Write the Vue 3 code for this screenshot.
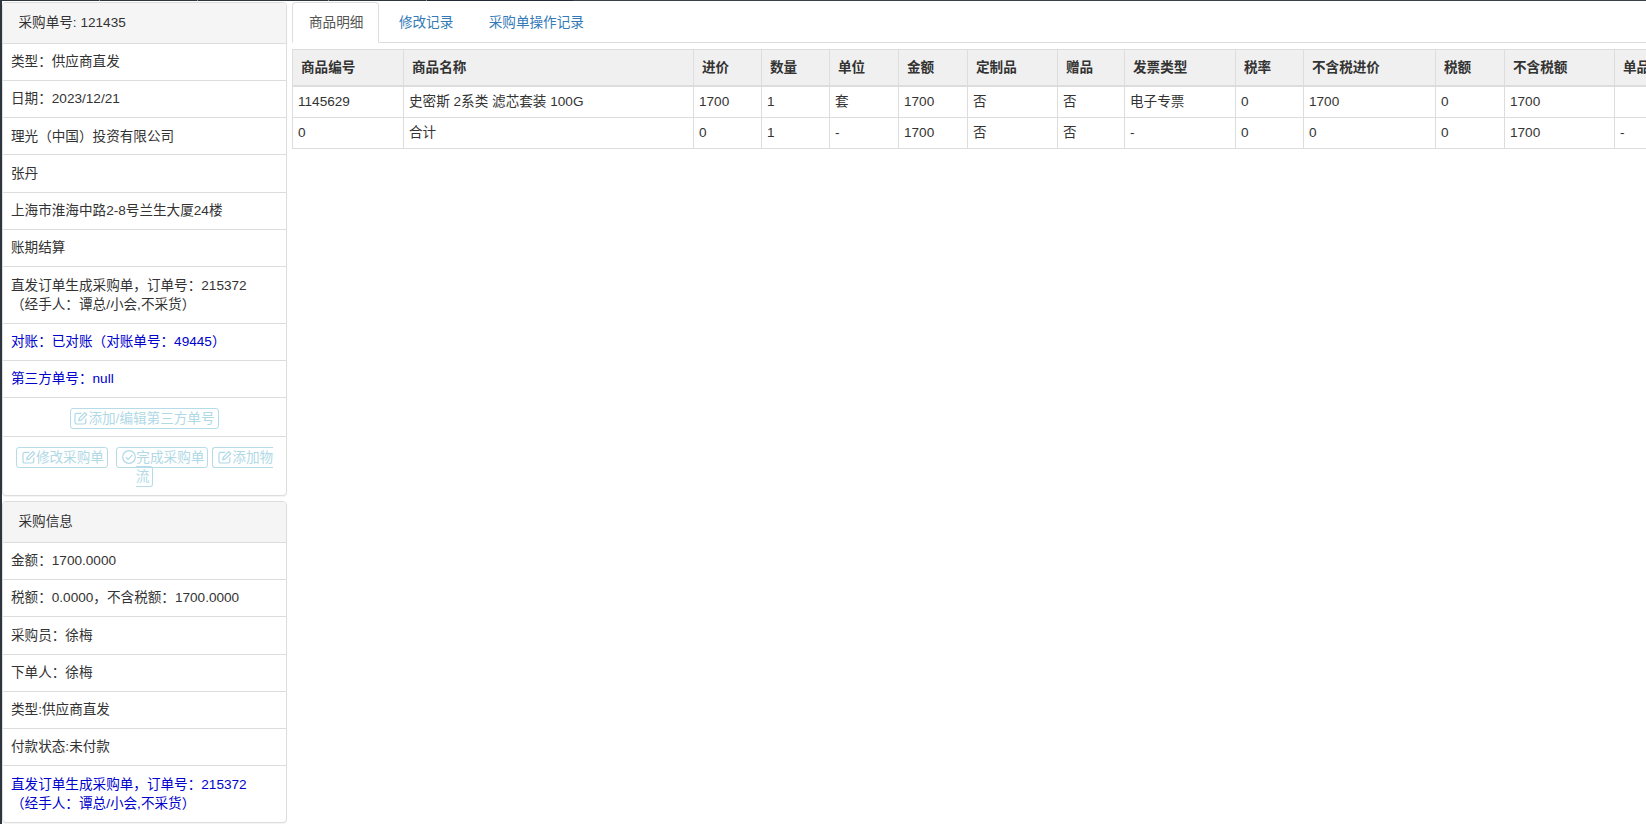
<script setup>
const orderRows = [
  { text: '类型：供应商直发' },
  { text: '日期：2023/12/21' },
  { text: '理光（中国）投资有限公司' },
  { text: '张丹' },
  { text: '上海市淮海中路2-8号兰生大厦24楼' },
  { text: '账期结算' },
  { text: '直发订单生成采购单，订单号：215372\n（经手人：谭总/小会,不采货）' },
  { text: '对账：已对账（对账单号：49445）', blue: true },
  { text: '第三方单号：null', blue: true }
]
const infoRows = [
  { text: '金额：1700.0000' },
  { text: '税额：0.0000，不含税额：1700.0000' },
  { text: '采购员：徐梅' },
  { text: '下单人：徐梅' },
  { text: '类型:供应商直发' },
  { text: '付款状态:未付款' },
  { text: '直发订单生成采购单，订单号：215372\n（经手人：谭总/小会,不采货）', blue: true }
]
const columns = [
  { label: '商品编号', width: 111 },
  { label: '商品名称', width: 290 },
  { label: '进价', width: 68 },
  { label: '数量', width: 68 },
  { label: '单位', width: 69 },
  { label: '金额', width: 69 },
  { label: '定制品', width: 90 },
  { label: '赠品', width: 67 },
  { label: '发票类型', width: 111 },
  { label: '税率', width: 68 },
  { label: '不含税进价', width: 132 },
  { label: '税额', width: 69 },
  { label: '不含税额', width: 110 },
  { label: '单品', width: 100 }
]
const tableWidth = columns.reduce((s, c) => s + c.width, 0)
const rows = [
  ['1145629', '史密斯 2系类 滤芯套装 100G', '1700', '1', '套', '1700', '否', '否', '电子专票', '0', '1700', '0', '1700', ''],
  ['0', '合计', '0', '1', '-', '1700', '否', '否', '-', '0', '0', '0', '1700', '-']
]
</script>

<template>
  <div class="page">
    <div class="topline"></div>
    <div class="main">
      <aside class="side">
        <section class="panel">
          <div class="panel-head">采购单号: 121435</div>
          <div v-for="r in orderRows" :key="r.text" class="row" :class="{ blue: r.blue }">{{ r.text }}</div>
          <div class="row center first-btns">
            <a class="btn"><svg class="ico" viewBox="0 0 14 14"><path d="M11.8 7.6v3.7a1.700 1.700 0 0 1-1.700 1.700H2.700A1.700 1.700 0 0 1 1 11.300V4a1.700 1.700 0 0 1 1.700-1.700H7.400M5.200 7.400 10.800 1.500l1.900 1.900L7.100 9.200l-2.300.5z"/></svg>添加/编辑第三方单号</a>
          </div>
          <div class="row center last">
            <a class="btn wide gap-lg"><svg class="ico" viewBox="0 0 14 14"><path d="M11.8 7.6v3.7a1.700 1.700 0 0 1-1.700 1.700H2.700A1.700 1.700 0 0 1 1 11.300V4a1.700 1.700 0 0 1 1.700-1.700H7.400M5.200 7.400 10.800 1.500l1.900 1.900L7.100 9.200l-2.300.5z"/></svg>修改采购单</a>
            <a class="btn wide gap-sm"><svg class="ico" viewBox="0 0 14 14"><circle cx="7" cy="7" r="6.300"/><path d="M3.800 7.200 6.100 9.500 10.400 4.900"/></svg>完成采购单</a>
            <a class="btn wide"><svg class="ico" viewBox="0 0 14 14"><path d="M11.8 7.6v3.7a1.700 1.700 0 0 1-1.700 1.700H2.700A1.700 1.700 0 0 1 1 11.300V4a1.700 1.700 0 0 1 1.700-1.700H7.400M5.200 7.400 10.800 1.500l1.900 1.900L7.100 9.200l-2.300.5z"/></svg>添加物流</a>
          </div>
        </section>
        <section class="panel">
          <div class="panel-head">采购信息</div>
          <div v-for="r in infoRows" :key="r.text" class="row" :class="{ blue: r.blue }">{{ r.text }}</div>
        </section>
      </aside>
      <main class="content">
        <nav class="tabs">
          <a class="tab active">商品明细</a>
          <a class="tab">修改记录</a>
          <a class="tab">采购单操作记录</a>
        </nav>
        <div class="table-clip">
          <table class="grid" :style="{ width: tableWidth + 'px' }">
            <colgroup>
              <col v-for="c in columns" :key="c.label" :style="{ width: c.width + 'px' }" />
            </colgroup>
            <thead>
              <tr><th v-for="c in columns" :key="c.label">{{ c.label }}</th></tr>
            </thead>
            <tbody>
              <tr v-for="(row, i) in rows" :key="i">
                <td v-for="(cell, j) in row" :key="j">{{ cell }}</td>
              </tr>
            </tbody>
          </table>
        </div>
      </main>
    </div>
  </div>
</template>

<style>
html, body { margin: 0; background: #fff; overflow: hidden; }
</style>

<style scoped>
.page {
  width: 1646px;
  height: 824px;
  overflow: hidden;
  box-sizing: border-box;
  border-left: 2px solid #2f353e;
  font-family: "Liberation Sans", "Noto Sans CJK SC", sans-serif;
  font-size: 13.6px;
  line-height: 1.42857;
  color: #333;
  background: #fff;
}
.topline {
  height: 1px;
  background: linear-gradient(90deg,
    #2f353e 0 97px, #8a9098 97px 98px,
    #2f353e 98px 195px, #8a9098 195px 196px,
    #2f353e 196px 326px, #8a9098 326px 327px,
    #2f353e 327px 424px, #8a9098 424px 425px,
    #232a36 425px 571px, #39404a 571px 100%);
}
.main { display: flex; align-items: flex-start; padding-top: 1px; }
.side { width: 285px; flex: none; display: flex; flex-direction: column; gap: 5.5px; }
.panel {
  border: 1px solid #ddd;
  border-radius: 4px;
  box-shadow: 0 1px 1px rgba(0, 0, 0, .05);
  background: #fff;
  overflow: hidden;
}
.panel-head {
  padding: 10.1px 16px 10.1px 15.5px;
  background: #f5f5f5;
  border-bottom: 1px solid #ddd;
}
.row {
  padding: 8.43px 8px;
  border-bottom: 1px solid #ddd;
  white-space: pre-line;
}
.row:last-child { border-bottom: 0; }
.blue { color: #00c; }
.center { text-align: center; padding-left: 12px; padding-right: 12px; white-space: normal; }
.first-btns { padding-top: 10.3px; padding-bottom: 7.8px; }
.last { padding-top: 11.3px; padding-bottom: 7.8px; }
.btn {
  padding: 2px 3px;
  border: 1px solid #b5dce8;
  border-radius: 3px;
  color: #b0d9e6;
}
.wide { padding-left: 5px; }
.gap-lg { margin-right: 8.5px; }
.gap-sm { margin-right: 4px; }
.ico {
  width: 14px;
  height: 14px;
  vertical-align: -2px;
  fill: none;
  stroke: #b0d9e6;
  stroke-width: 1.2;
}
.content { flex: 1; min-width: 0; padding-left: 5px; }
.tabs {
  display: flex;
  height: 41px;
  box-sizing: border-box;
  border-bottom: 1px solid #ddd;
}
.tab {
  padding: 10px 15px 10px 16px;
  margin-right: 2.5px;
  margin-bottom: -1px;
  border: 1px solid transparent;
  border-radius: 4px 4px 0 0;
  color: #337ab7;
}
.tab.active {
  color: #555;
  background: #fff;
  border-color: #ddd #ddd #fff;
}
.table-clip { margin-top: 6px; overflow: hidden; }
.grid {
  table-layout: fixed;
  border-collapse: collapse;
  background: #fff;
}
th, td {
  border: 1px solid #ddd;
  text-align: left;
  white-space: nowrap;
  overflow: hidden;
}
th {
  padding: 8px;
  font-weight: 700;
  background: #f0f0f0;
  border-bottom-width: 2px;
}
td { padding: 4.8px 5px 5.7px; }
</style>
